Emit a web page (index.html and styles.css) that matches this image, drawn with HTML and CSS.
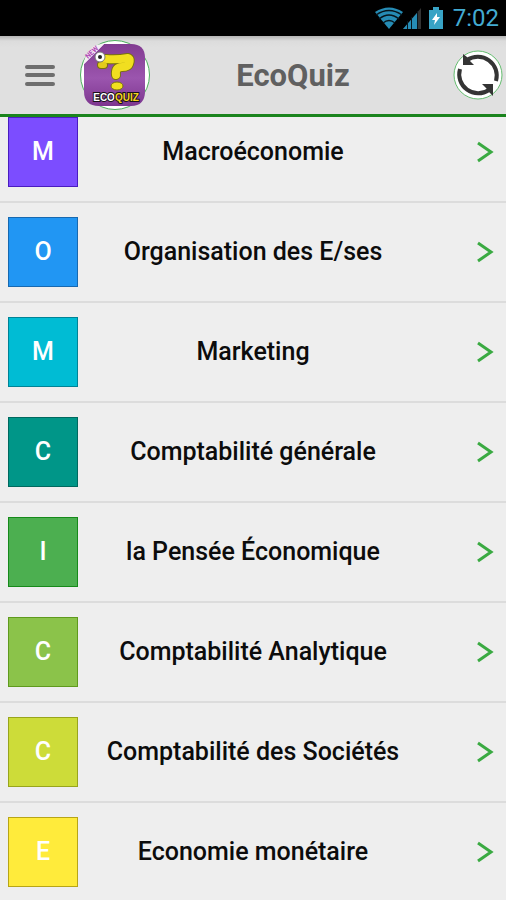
FILE: index.html
```html
<!DOCTYPE html>
<html lang="fr">
<head>
<meta charset="utf-8">
<meta name="viewport" content="width=device-width, initial-scale=1">
<title>EcoQuiz</title>
<link rel="stylesheet" href="styles.css">
</head>
<body>
<div class="status-bar">
  <svg class="status-icons" width="72" height="24" viewBox="0 0 72 24" aria-hidden="true">
    <path fill="#268cb5" d="M0 6Q14 -3 28 6L14 23Z"/>
    <path fill="none" stroke="#07151c" stroke-width="1.3" d="M1 9Q14 0 27 9M4 13Q14 5 24 13M8 17Q14 12 20 17"/>
    <path fill="#333" d="M28 23L46 2V23Z"/>
    <path fill="#268cb5" d="M28 23L42 7V23Z"/>
    <path stroke="#07151c" d="M32.500 15V23M36.500 11V23M42.500 5V23"/>
    <path fill="#38a3c5" d="M54 4H58V1H64V4H68V23H54Z"/>
    <path fill="#fff" d="M62 7L57 14H60L59 19L65 11H62Z"/>
  </svg>
  <time class="clock">7:02</time>
</div>
<header class="app-bar">
  <button class="icon-button menu" type="button" aria-label="Menu">
    <svg width="30" height="22" viewBox="0 0 30 22"><path d="M2 3H28M2 11H28M2 20H28" stroke="#6e6e6e" stroke-width="4" stroke-linecap="round"/></svg>
  </button>
  <svg class="logo" width="72" height="72" viewBox="0 0 72 72" role="img" aria-label="EcoQuiz">
    <defs>
      <linearGradient id="purple" x1="0" y1="0" x2="0" y2="1"><stop offset="0" stop-color="#823b91"/><stop offset=".55" stop-color="#9b55ae"/><stop offset="1" stop-color="#7d368f"/></linearGradient>
    </defs>
    <circle cx="36" cy="36" r="34.500" fill="#fff" stroke="#4caf5c"/>
    <path fill="url(#purple)" d="M25 5H52Q66 5 66 19V52Q66 67 52 67H20Q5 67 5 52V25Z"/>
    <path fill="#f5edf5" d="M10 12Q14 5 25 5L5 25Q5 18 10 12Z"/>
    <text class="ribbon" x="9" y="20" transform="rotate(-43 9 20)">NEW</text>
    <g fill="none" stroke-linecap="round" stroke-linejoin="round">
      <path stroke="#79720d" stroke-width="10" d="M27 20Q38 21 49 19Q52 20 50 25Q49 28 43 28Q36 28 37 36"/>
      <path stroke="#79720d" stroke-width="8" d="M25 26H22"/>
      <path stroke="#f1de20" stroke-width="8" d="M27 20Q38 21 49 19Q52 20 50 25Q49 28 43 28Q36 28 37 36"/>
      <path stroke="#e3cb1c" stroke-width="6" d="M25 26H22"/>
    </g>
    <ellipse cx="38" cy="47" rx="6" ry="4" fill="#f1de20" stroke="#79720d"/>
    <circle cx="21" cy="18" r="5" fill="#fff" stroke="#777"/>
    <circle cx="21" cy="18" r="2" fill="#222"/>
    <text class="wordmark" x="37" y="62" text-anchor="middle"><tspan fill="#fff">ECO</tspan><tspan fill="#f3d321">QUIZ</tspan></text>
  </svg>
  <h1 class="title">EcoQuiz</h1>
  <button class="icon-button refresh" type="button" aria-label="Actualiser">
    <svg width="50" height="50" viewBox="0 0 50 50">
      <circle cx="25" cy="25" r="24" fill="#fff" stroke="#65bd70"/>
      <g fill="none" stroke="#343434" stroke-width="4"><path d="M14 10A19 19 0 0 1 43 31"/><path d="M36 40A19 19 0 0 1 7 19"/></g>
      <path fill="#343434" d="M10 4V15H21L17 11L14 7ZM40 46V34H29L33 38L36 42Z"/>
    </svg>
  </button>
</header>
<main>
  <ul class="topics">
    <li><a class="topic" href="#macro"><span class="tile violet">M</span><span>Macroéconomie</span><svg class="chevron" viewBox="0 0 18 22"><path d="M2 2L15 11L2 20"/></svg></a></li>
    <li><a class="topic" href="#organisation"><span class="tile blue">O</span><span>Organisation des E/ses</span><svg class="chevron" viewBox="0 0 18 22"><path d="M2 2L15 11L2 20"/></svg></a></li>
    <li><a class="topic" href="#marketing"><span class="tile cyan">M</span><span>Marketing</span><svg class="chevron" viewBox="0 0 18 22"><path d="M2 2L15 11L2 20"/></svg></a></li>
    <li><a class="topic" href="#generale"><span class="tile teal">C</span><span>Comptabilité générale</span><svg class="chevron" viewBox="0 0 18 22"><path d="M2 2L15 11L2 20"/></svg></a></li>
    <li><a class="topic" href="#pensee"><span class="tile green">I</span><span>la Pensée Économique</span><svg class="chevron" viewBox="0 0 18 22"><path d="M2 2L15 11L2 20"/></svg></a></li>
    <li><a class="topic" href="#analytique"><span class="tile light-green">C</span><span>Comptabilité Analytique</span><svg class="chevron" viewBox="0 0 18 22"><path d="M2 2L15 11L2 20"/></svg></a></li>
    <li><a class="topic" href="#societes"><span class="tile lime">C</span><span>Comptabilité des Sociétés</span><svg class="chevron" viewBox="0 0 18 22"><path d="M2 2L15 11L2 20"/></svg></a></li>
    <li><a class="topic" href="#monetaire"><span class="tile yellow">E</span><span>Economie monétaire</span><svg class="chevron" viewBox="0 0 18 22"><path d="M2 2L15 11L2 20"/></svg></a></li>
  </ul>
</main>
</body>
</html>
```
FILE: styles.css
```css
* {
  box-sizing: border-box;
}

body {
  margin: 0;
  height: 100vh;
  display: flex;
  flex-direction: column;
  overflow: hidden;
  background: #eee;
  color: #0c0c0c;
  font-family: Roboto, "Liberation Sans", sans-serif;
}

.status-bar {
  display: flex;
  flex: none;
  align-items: center;
  justify-content: flex-end;
  gap: 6px;
  height: 36px;
  padding-right: 7px;
  background: #000;
}

.clock {
  color: #43abd2;
  font-size: 24px;
  line-height: 36px;
}

.app-bar {
  display: flex;
  flex: none;
  align-items: center;
  height: 81px;
  padding: 0 3px 0 25px;
  border-bottom: 3px solid #1a841d;
  background: linear-gradient(#b4b4b4, #dcdcdc 5px, #e0e0e0 12px);
}

.icon-button {
  display: flex;
  padding: 0;
  border: 0;
  background: none;
}

.logo {
  margin-left: 24px;
}

.ribbon {
  fill: #b04ab4;
  font-size: 7px;
  font-weight: 700;
}

.wordmark {
  font-family: "Liberation Sans", sans-serif;
  font-size: 10px;
  font-weight: 700;
  stroke: #171018;
  stroke-width: 2px;
  paint-order: stroke;
}

.title {
  flex: 1;
  margin: 0;
  padding: 2px 18px 0 0;
  color: #606060;
  font-size: 31px;
  font-weight: 700;
  line-height: 40px;
  text-align: center;
}

main {
  flex: 1;
  min-height: 0;
  overflow: hidden;
}

.topics {
  margin: -14px 0 0;
  padding: 0;
  list-style: none;
}

.topic {
  display: grid;
  grid-template-columns: 70px 1fr 70px;
  align-items: center;
  height: 100px;
  padding: 0 8px;
  border-bottom: 2px solid #dcdcdc;
  color: inherit;
  font-size: 25px;
  font-weight: 500;
  line-height: 30px;
  text-align: center;
  text-decoration: none;
}

.tile {
  display: grid;
  place-items: center;
  height: 70px;
  border: 1px solid;
  color: #fff;
}

.violet { background: #7c4dff; border-color: #4a1cc0; }
.blue { background: #2196f3; border-color: #1769b0; }
.cyan { background: #00bcd4; border-color: #008396; }
.teal { background: #009688; border-color: #00695f; }
.green { background: #4caf50; border-color: #168a1a; }
.light-green { background: #8bc34a; border-color: #5f9a1d; }
.lime { background: #cddc39; border-color: #98a51c; }
.yellow { background: #ffeb3b; border-color: #b7a516; }

.chevron {
  justify-self: end;
  width: 18px;
  height: 22px;
  margin-right: 4px;
  fill: none;
  stroke: #3aaa42;
  stroke-width: 3;
}
```
